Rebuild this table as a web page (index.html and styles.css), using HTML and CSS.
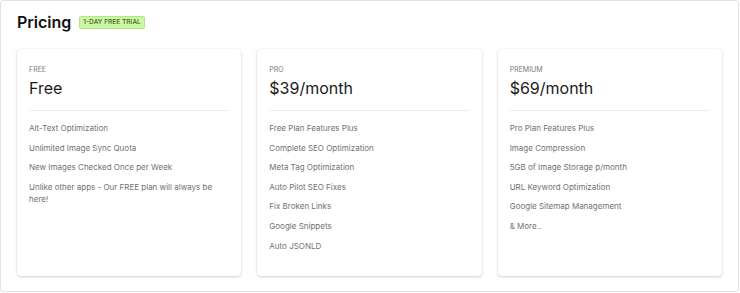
FILE: index.html
```html
<!DOCTYPE html>
<html lang="en">
<head>
  <meta charset="UTF-8" />
  <title>Pricing</title>
  <meta name="viewport" content="width=device-width, initial-scale=1.0" />
  <link rel="stylesheet" href="styles.css">
</head>
<body>
  <section class="pricing">
    <header class="pricing-head">
      <h1>Pricing</h1>
      <span class="trial-badge">1-Day Free Trial</span>
    </header>

    <div class="plan-grid">
      <div class="plan">
        <div class="plan-name">Free</div>
        <div class="plan-price">Free</div>
        <ul class="plan-features">
          <li>Alt-Text Optimization</li>
          <li>Unlimited Image Sync Quota</li>
          <li>New Images Checked Once per Week</li>
          <li>Unlike other apps - Our FREE plan will always be here!</li>
        </ul>
      </div>
      <div class="plan">
        <div class="plan-name">Pro</div>
        <div class="plan-price">$39/month</div>
        <ul class="plan-features">
          <li>Free Plan Features Plus</li>
          <li>Complete SEO Optimization</li>
          <li>Meta Tag Optimization</li>
          <li>Auto Pilot SEO Fixes</li>
          <li>Fix Broken Links</li>
          <li>Google Snippets</li>
          <li>Auto JSONLD</li>
        </ul>
      </div>
      <div class="plan">
        <div class="plan-name">Premium</div>
        <div class="plan-price">$69/month</div>
        <ul class="plan-features">
          <li>Pro Plan Features Plus</li>
          <li>Image Compression</li>
          <li>5GB of Image Storage p/month</li>
          <li>URL Keyword Optimization</li>
          <li>Google Sitemap Management</li>
          <li>&amp; More..</li>
        </ul>
      </div>
    </div>
  </section>
</body>
</html>
```

FILE: styles.css
```css
body {
  margin: 0;
  padding: 0;
  font-family: Inter, "Noto Sans", sans-serif;
  background: #fff;
  color: #333;
}
.pricing {
  width: 739px;
  height: 292px;
  box-sizing: border-box;
  border: 1px solid #e3e3e3;
  border-radius: 3px;
  padding: 11px 16px 15px;
}
.pricing-head {
  display: flex;
  align-items: center;
  gap: 8px;
  margin-bottom: 17px;
}
h1 {
  margin: 0;
  font-size: 16px;
  line-height: 20px;
  font-weight: 600;
  color: #111;
}
.trial-badge {
  display: inline-block;
  background: #ccf7a3;
  border: 1px solid #b0e887;
  border-radius: 2px;
  color: #46622d;
  font-size: 6.6px;
  font-weight: 500;
  line-height: 11px;
  padding: 0 3px;
  text-transform: uppercase;
}
.plan-grid {
  display: grid;
  grid-template-columns: repeat(3, 1fr);
  gap: 16px;
}
.plan {
  background: #fff;
  border-radius: 4px;
  box-shadow: 0 1px 3px rgba(0, 0, 0, 0.18), 0 0 1px rgba(0, 0, 0, 0.12);
  padding: 16px 12px 20px;
  height: 227px;
  box-sizing: border-box;
}
.plan-name {
  font-size: 7px;
  line-height: 10px;
  color: #7a7a7a;
  text-transform: uppercase;
}
.plan-price {
  font-size: 16px;
  line-height: 20px;
  color: #1a1a1a;
  margin-top: 3px;
  padding-bottom: 12px;
  border-bottom: 1px solid #ececec;
}
.plan-features {
  list-style: none;
  margin: 0;
  padding: 0;
  padding-top: 11px;
}
.plan-features li {
  font-size: 8px;
  line-height: 12px;
  color: #717171;
  margin-bottom: 7.6px;
}
```
